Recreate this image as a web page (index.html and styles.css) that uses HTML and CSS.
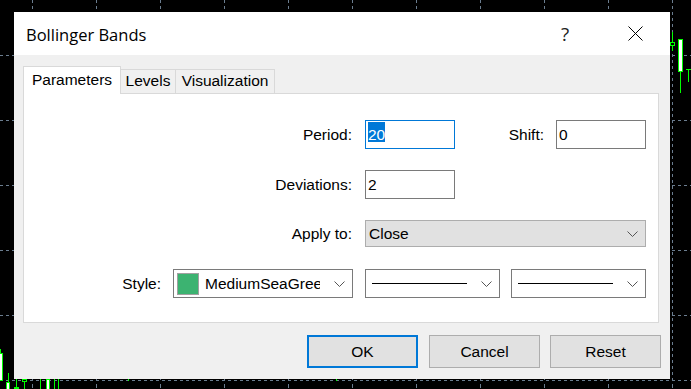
FILE: index.html
```html
<!DOCTYPE html>
<html>
<head>
<meta charset="utf-8">
<link rel="stylesheet" href="styles.css">
</head>
<body>
<div class="desktop">
  <svg class="chart" width="691" height="389" viewBox="0 0 691 389" shape-rendering="crispEdges">
    <g class="grid" stroke="#6b7d8f" stroke-width="1" stroke-dasharray="3 3" fill="none">
      <line x1="0" y1="55.5" x2="691" y2="55.5"/>
      <line x1="0" y1="120.5" x2="691" y2="120.5"/>
      <line x1="0" y1="185.5" x2="691" y2="185.5"/>
      <line x1="0" y1="250.5" x2="691" y2="250.5"/>
      <line x1="0" y1="315.5" x2="691" y2="315.5"/>
      <line x1="0" y1="380.5" x2="691" y2="380.5"/>
      <line x1="32.5" y1="0" x2="32.5" y2="380"/>
      <line x1="96.5" y1="0" x2="96.5" y2="380"/>
      <line x1="160.5" y1="0" x2="160.5" y2="380"/>
      <line x1="224.5" y1="0" x2="224.5" y2="380"/>
      <line x1="288.5" y1="0" x2="288.5" y2="380"/>
      <line x1="352.5" y1="0" x2="352.5" y2="380"/>
      <line x1="416.5" y1="0" x2="416.5" y2="380"/>
      <line x1="480.5" y1="0" x2="480.5" y2="380"/>
      <line x1="544.5" y1="0" x2="544.5" y2="380"/>
      <line x1="608.5" y1="0" x2="608.5" y2="380"/>
      <line x1="672.5" y1="0" x2="672.5" y2="380"/>
    </g>
    <g stroke="#6b7d8f" stroke-width="1">
      <line x1="32.5" y1="384" x2="32.5" y2="388"/>
      <line x1="96.5" y1="384" x2="96.5" y2="388"/>
      <line x1="160.5" y1="384" x2="160.5" y2="388"/>
      <line x1="224.5" y1="384" x2="224.5" y2="388"/>
      <line x1="288.5" y1="384" x2="288.5" y2="388"/>
      <line x1="352.5" y1="384" x2="352.5" y2="388"/>
      <line x1="416.5" y1="384" x2="416.5" y2="388"/>
      <line x1="480.5" y1="384" x2="480.5" y2="388"/>
      <line x1="544.5" y1="384" x2="544.5" y2="388"/>
      <line x1="608.5" y1="384" x2="608.5" y2="388"/>
      <line x1="672.5" y1="384" x2="672.5" y2="388"/>
    </g>
    <g stroke="#00ff00" stroke-width="1">
      <line x1="672.5" y1="32" x2="672.5" y2="51"/>
      <rect x="670.5" y="42.5" width="4" height="3" fill="#000"/>
      <line x1="680.5" y1="72" x2="680.5" y2="93"/>
      <rect x="678.5" y="39.5" width="4" height="32" fill="#fff"/>
      <line x1="686" y1="69.5" x2="691" y2="69.5"/>
      <line x1="688.5" y1="69" x2="688.5" y2="82"/>

      <line x1="0.5" y1="349" x2="0.5" y2="354"/>
      <rect x="-0.5" y="353.5" width="3" height="27" fill="#fff"/>
      <line x1="8.5" y1="373" x2="8.5" y2="382"/>
      <rect x="6.5" y="382.5" width="3" height="8" fill="#fff"/>
      <line x1="16.5" y1="379" x2="16.5" y2="389"/>
      <rect x="14" y="387" width="5" height="2" fill="#00ff00" stroke="none"/>
      <rect x="22.5" y="379.5" width="4" height="2" fill="#000"/>
      <line x1="24.5" y1="382" x2="24.5" y2="389"/>
      <line x1="40.5" y1="379" x2="40.5" y2="389"/>
      <rect x="46.5" y="379.5" width="3" height="10" fill="#fff"/>
      <line x1="54.5" y1="379" x2="54.5" y2="389"/>
      <line x1="58.5" y1="379" x2="58.5" y2="389"/>
      <line x1="128.5" y1="379" x2="128.5" y2="381"/>
      <line x1="336.5" y1="379" x2="336.5" y2="381"/>
    </g>
  </svg>

  <div class="dialog">
    <div class="titlebar">
      <span class="title">Bollinger Bands</span>
      <span class="help">?</span>
      <span class="close">
        <svg width="15" height="15" viewBox="0 0 15 15"><path d="M0.5 0.5 L14.5 14.5 M14.5 0.5 L0.5 14.5" stroke="#000" stroke-width="1" fill="none"/></svg>
      </span>
    </div>
    <div class="content">
      <div class="tabs">
        <div class="tab active tab-params">Parameters</div>
        <div class="tab tab-levels">Levels</div>
        <div class="tab tab-vis">Visualization</div>
      </div>
      <div class="panel">
        <div class="row">
          <span class="lbl lbl-main">Period:</span>
          <div class="field focus"><span class="sel">20</span></div>
          <span class="lbl lbl-shift">Shift:</span>
          <div class="field">0</div>
        </div>
        <div class="row">
          <span class="lbl lbl-main">Deviations:</span>
          <div class="field">2</div>
        </div>
        <div class="row">
          <span class="lbl lbl-main">Apply to:</span>
          <div class="select">
            <span class="select-text">Close</span>
            <svg class="chev" width="11" height="6" viewBox="0 0 11 6"><path d="M0.5 0.5 L5.5 5.5 L10.5 0.5" stroke="#555" stroke-width="1" fill="none"/></svg>
          </div>
        </div>
        <div class="row row-style">
          <span class="lbl lbl-style">Style:</span>
          <div class="combo combo-color">
            <span class="swatch"></span>
            <span class="combo-text">MediumSeaGreen</span>
            <svg class="chev" width="11" height="6" viewBox="0 0 11 6"><path d="M0.5 0.5 L5.5 5.5 L10.5 0.5" stroke="#555" stroke-width="1" fill="none"/></svg>
          </div>
          <div class="combo combo-line">
            <span class="line-sample"></span>
            <svg class="chev" width="11" height="6" viewBox="0 0 11 6"><path d="M0.5 0.5 L5.5 5.5 L10.5 0.5" stroke="#555" stroke-width="1" fill="none"/></svg>
          </div>
          <div class="combo combo-line">
            <span class="line-sample"></span>
            <svg class="chev" width="11" height="6" viewBox="0 0 11 6"><path d="M0.5 0.5 L5.5 5.5 L10.5 0.5" stroke="#555" stroke-width="1" fill="none"/></svg>
          </div>
        </div>
      </div>
      <div class="buttons">
        <div class="btn primary">OK</div>
        <div class="btn">Cancel</div>
        <div class="btn">Reset</div>
      </div>
    </div>
  </div>
</div>
</body>
</html>
```

FILE: styles.css
```css
html, body {
  margin: 0;
  padding: 0;
}

body {
  width: 691px;
  height: 389px;
  overflow: hidden;
  background: #000;
  font-family: "Liberation Sans", Arial, sans-serif;
  font-size: 15.5px;
  color: #000;
}

.desktop {
  position: relative;
  width: 691px;
  height: 389px;
}

.chart {
  position: absolute;
  left: 0;
  top: 0;
  display: block;
}

.dialog {
  position: absolute;
  left: 14px;
  top: 12px;
  width: 656px;
  height: 367px;
  background: #f0f0f0;
  display: flex;
  flex-direction: column;
}

.titlebar {
  height: 43px;
  background: #fff;
  display: flex;
  align-items: center;
  padding-left: 12px;
}

.title {
  flex: 1;
  margin-top: 2px;
  font-family: "Open Sans", "Liberation Sans", sans-serif;
  font-size: 16.5px;
  color: #000;
}

.help {
  width: 20px;
  text-align: center;
  margin-right: 53px;
  font-family: "Open Sans", "Liberation Sans", sans-serif;
  font-size: 19px;
  color: #222;
}

.close {
  width: 15px;
  height: 15px;
  margin-right: 27px;
  display: flex;
}

.content {
  flex: 1;
  display: flex;
  flex-direction: column;
  padding: 11px 9px 0 9px;
}

.tabs {
  display: flex;
  align-items: flex-end;
  height: 27px;
}

.tab {
  box-sizing: border-box;
  height: 24px;
  padding-top: 2px;
  line-height: 18px;
  text-align: center;
  border-top: 1px solid #d9d9d9;
  border-right: 1px solid #d9d9d9;
  background: #f0f0f0;
  white-space: nowrap;
}

.tab.active {
  position: relative;
  z-index: 1;
  height: 28px;
  padding-top: 4px;
  margin-bottom: -1px;
  border-left: 1px solid #d9d9d9;
  background: #fff;
}

.tab-params { width: 98px; }
.tab-levels { width: 55px; }
.tab-vis { width: 99px; }

.panel {
  box-sizing: border-box;
  width: 636px;
  height: 230px;
  border: 1px solid #d9d9d9;
  background: #fff;
  padding-top: 26px;
  display: flex;
  flex-direction: column;
  gap: 21px;
}

.row {
  display: flex;
  align-items: center;
}

.row-style {
  margin-top: 1px;
}

.lbl {
  text-align: right;
  white-space: nowrap;
}

.lbl-main {
  width: 328px;
  margin-right: 13px;
}

.lbl-shift {
  width: 89px;
  margin-right: 12px;
}

.lbl-style {
  width: 137px;
  margin-right: 12px;
}

.field {
  box-sizing: border-box;
  width: 90px;
  height: 29px;
  border: 1px solid #7a7a7a;
  background: #fff;
  padding-left: 2px;
  line-height: 27px;
}

.field.focus {
  border-color: #0078d7;
}

.sel {
  display: inline-block;
  background: #0078d7;
  color: #fff;
  padding-top: 5px;
  line-height: 15px;
}

.select {
  box-sizing: border-box;
  width: 281px;
  height: 27px;
  border: 1px solid #adadad;
  background: #e1e1e1;
  display: flex;
  align-items: center;
  padding-left: 3px;
  padding-right: 7px;
}

.select-text {
  flex: 1;
}

.chev {
  display: block;
  flex: none;
}

.combo {
  box-sizing: border-box;
  height: 29px;
  border: 1px solid #7a7a7a;
  background: #fff;
  display: flex;
  align-items: center;
  padding-right: 7px;
}

.combo-color {
  width: 180px;
  margin-right: 12px;
  padding-left: 3px;
}

.swatch {
  box-sizing: border-box;
  width: 22px;
  height: 22px;
  border: 1px solid #a0a0a0;
  background: #3cb371;
  margin-right: 6px;
  flex: none;
}

.combo-text {
  width: 115px;
  overflow: hidden;
  white-space: nowrap;
  margin-right: 14px;
}

.combo-line {
  width: 135px;
  padding-left: 6px;
}

.combo-line + .combo-line {
  margin-left: 11px;
}

.combo-line .chev {
  margin-left: 14px;
}

.line-sample {
  width: 95px;
  height: 1px;
  background: #000;
}

.buttons {
  display: flex;
  justify-content: flex-end;
  gap: 10px;
  margin-top: 12px;
}

.btn {
  box-sizing: border-box;
  width: 111px;
  height: 33px;
  border: 1px solid #adadad;
  background: #e1e1e1;
  display: flex;
  align-items: center;
  justify-content: center;
}

.btn.primary {
  border: 2px solid #0078d7;
  margin-right: 1px;
}
```
